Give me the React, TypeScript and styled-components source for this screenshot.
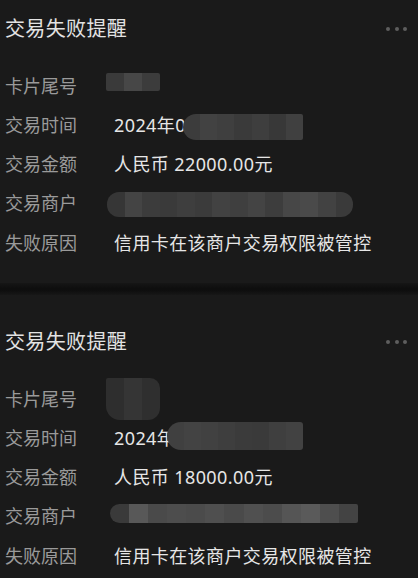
import React from "react";
import styled, { createGlobalStyle } from "styled-components";

const GlobalStyle = createGlobalStyle`
  html, body {
    margin: 0;
    padding: 0;
    background: #1a1a1a;
    overflow: hidden;
  }
  body {
    font-family: "Noto Sans", "Noto Sans CJK SC", sans-serif;
  }
`;

const Page = styled.div`
  display: flex;
  flex-direction: column;
  margin-top: -18px;
`;

const Card = styled.section`
  background: #1a1a1a;
  padding: 33px 10px 21.75px 5px;
`;

const Divider = styled.div`
  height: 12px;
  background: linear-gradient(180deg, #161616 0%, #0e0e0e 45%, #0e0e0e 60%, #171717 100%);
`;

const Header = styled.div`
  display: flex;
  align-items: center;
  justify-content: space-between;
  height: 28px;
  margin-bottom: 22px;
`;

const Title = styled.h2`
  margin: 0;
  font-size: 20px;
  font-weight: 400;
  color: #e3e3e3;
  line-height: 28px;
  letter-spacing: 0.35px;
`;

const MoreDots = styled.div`
  display: flex;
  gap: 4.5px;
  padding-right: 1px;
  span {
    width: 4px;
    height: 4px;
    border-radius: 50%;
    background: #5e5e5e;
  }
`;

const Row = styled.div`
  display: grid;
  grid-template-columns: 109px 1fr;
  height: 39.25px;
  align-items: center;
`;

const Label = styled.span`
  font-size: 18px;
  color: #9a9a9a;
`;

const Value = styled.span`
  position: relative;
  align-self: stretch;
  display: flex;
  align-items: center;
  font-size: 18px;
  color: #e6e6e6;
  letter-spacing: 0.4px;
  white-space: pre;
`;

const Mosaic = styled.span<{ $left: number; $top: number; $w: number; $h: number; $radius: string }>`
  position: absolute;
  left: ${(p) => p.$left}px;
  top: ${(p) => p.$top}px;
  width: ${(p) => p.$w}px;
  height: ${(p) => p.$h}px;
  border-radius: ${(p) => p.$radius};
  overflow: hidden;
  display: flex;
  filter: blur(0.6px);
`;

const Block = styled.span<{ $c: string }>`
  flex: 1;
  background: ${(p) => p.$c};
`;

type Mask = { left: number; top: number; w: number; h: number; radius: string; colors: string[] };

type Item = { label: string; value: string; mask?: Mask };

const Redact = ({ m }: { m: Mask }) => (
  <Mosaic $left={m.left} $top={m.top} $w={m.w} $h={m.h} $radius={m.radius}>
    {m.colors.map((c, i) => (
      <Block key={i} $c={c} />
    ))}
  </Mosaic>
);

const cards: Item[][] = [
  [
    {
      label: "卡片尾号",
      value: "",
      mask: { left: -8, top: 8, w: 54, h: 18, radius: "2px", colors: ["#3a3a3a", "#474747", "#3c3c3c"] },
    },
    {
      label: "交易时间",
      value: "2024年0",
      mask: {
        left: 69, top: 10, w: 120, h: 26, radius: "13px 2px 2px 13px",
        colors: ["#3c3c3c", "#424242", "#3f3f3f", "#3a3a3a", "#3e3e3e", "#383838", "#404040"],
      },
    },
    { label: "交易金额", value: "人民币 22000.00元" },
    {
      label: "交易商户",
      value: "",
      mask: {
        left: -7, top: 9, w: 246, h: 25, radius: "12px",
        colors: ["#363636", "#444444", "#3c3c3c", "#3a3a3a", "#3e3e3e", "#3b3b3b", "#424242", "#3f3f3f", "#444444", "#3d3d3d", "#474747", "#4a4a4a", "#424242", "#3a3a3a"],
      },
    },
    { label: "失败原因", value: "信用卡在该商户交易权限被管控" },
  ],
  [
    {
      label: "卡片尾号",
      value: "",
      mask: { left: -8, top: 0, w: 54, h: 42, radius: "2px 10px 12px 14px", colors: ["#2e2e2e", "#353535", "#2f2f2f"] },
    },
    {
      label: "交易时间",
      value: "2024年",
      mask: {
        left: 53, top: 5, w: 136, h: 28, radius: "14px 3px 3px 14px",
        colors: ["#404040", "#434343", "#414141", "#3e3e3e", "#3b3b3b", "#3a3a3a", "#3f3f3f", "#424242"],
      },
    },
    { label: "交易金额", value: "人民币 18000.00元" },
    {
      label: "交易商户",
      value: "",
      mask: {
        left: -4, top: 8.5, w: 248, h: 19, radius: "10px 2px 2px 10px",
        colors: ["#3a3a3a", "#585858", "#4a4a4a", "#4d4d4d", "#4b4b4b", "#4f4f4f", "#4a4a4a", "#505050", "#4c4c4c", "#555555", "#5a5a5a", "#4e4e4e", "#434343"],
      },
    },
    { label: "失败原因", value: "信用卡在该商户交易权限被管控" },
  ],
];

export default function App() {
  return (
    <>
      <GlobalStyle />
      <Page>
        {cards.map((items, ci) => (
          <React.Fragment key={ci}>
            {ci > 0 && <Divider />}
            <Card>
              <Header>
                <Title>交易失败提醒</Title>
                <MoreDots>
                  <span />
                  <span />
                  <span />
                </MoreDots>
              </Header>
              {items.map((it) => (
                <Row key={it.label}>
                  <Label>{it.label}</Label>
                  <Value>
                    {it.value}
                    {it.mask && <Redact m={it.mask} />}
                  </Value>
                </Row>
              ))}
            </Card>
          </React.Fragment>
        ))}
      </Page>
    </>
  );
}
